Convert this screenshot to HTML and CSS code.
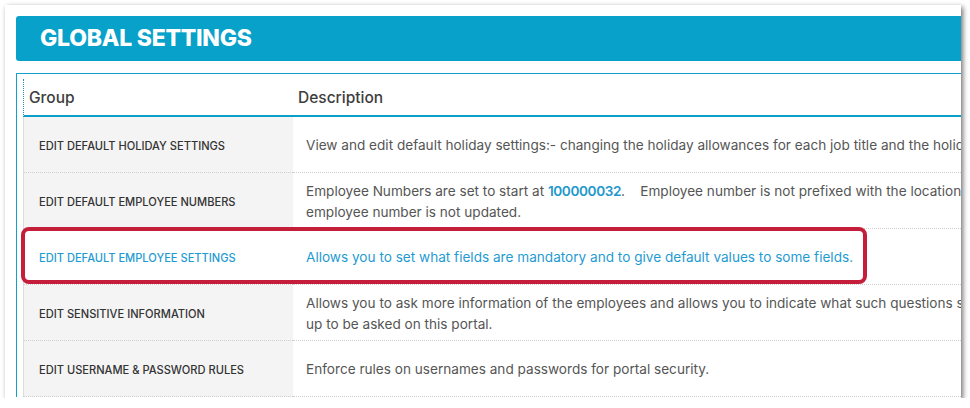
FILE: index.html
```html
<!DOCTYPE html>
<html lang="en">
<head>
    <meta charset="UTF-8">
    <meta name="viewport" content="width=device-width, initial-scale=1.0">
    <title>Global Settings</title>
    <link rel="stylesheet" href="styles.css">
</head>
<body>
    <div class="shot">
        <div class="page">
            <h1 class="banner">GLOBAL SETTINGS</h1>
            <div class="panel">
                <table class="settings">
                    <thead>
                        <tr>
                            <th class="col-group">Group</th>
                            <th>Description</th>
                        </tr>
                    </thead>
                    <tbody>
                        <tr>
                            <td class="label">Edit Default Holiday Settings</td>
                            <td class="desc">View and edit default holiday settings:- changing the holiday allowances for each job title and the holiday year.</td>
                        </tr>
                        <tr>
                            <td class="label">Edit Default Employee Numbers</td>
                            <td class="desc">Employee Numbers are set to start at <b class="num">100000032</b>.&nbsp;&nbsp;&nbsp; Employee number is not prefixed with the location code.<br>employee number is not updated.</td>
                        </tr>
                        <tr class="active">
                            <td class="label">Edit Default Employee Settings</td>
                            <td class="desc">Allows you to set what fields are mandatory and to give default values to some fields.</td>
                        </tr>
                        <tr>
                            <td class="label">Edit Sensitive Information</td>
                            <td class="desc">Allows you to ask more information of the employees and allows you to indicate what such questions should be set<br>up to be asked on this portal.</td>
                        </tr>
                        <tr>
                            <td class="label">Edit Username &amp; Password Rules</td>
                            <td class="desc">Enforce rules on usernames and passwords for portal security.</td>
                        </tr>
                    </tbody>
                </table>
            </div>
        </div>
        <!-- annotation drawn over the screenshot -->
        <div class="callout"></div>
    </div>
</body>
</html>
```

FILE: styles.css
```css
body {
    margin: 0;
    background: #fff;
    font-family: Inter, "Noto Sans", sans-serif;
}
.shot {
    position: relative;
    margin: 5px 0 0 5px;
    width: 956px;
    height: 393px;
    overflow: hidden;
    background: #fff;
    box-shadow: 2px 2px 5px rgba(0,0,0,0.55);
}
.page {
    width: 1150px;
    padding: 11px 0 0 11px;
}
.banner {
    margin: 0;
    height: 45px;
    line-height: 45px;
    padding-left: 24px;
    background-color: #08a1c9;
    border-radius: 3px 0 0 3px;
    color: #fff;
    font-size: 23px;
    font-weight: 800;
    letter-spacing: -0.25px;
}
.panel {
    margin-top: 12px;
    border-top: 1px solid #12a2c9;
    border-left: 1px solid #12a2c9;
    padding: 5px 0 0 6px;
}
.settings {
    border-collapse: separate;
    border-spacing: 0;
    width: 1120px;
}
.settings th {
    height: 36px;
    padding: 0 4px 0 5px;
    text-align: left;
    font-size: 15.5px;
    font-weight: 500;
    color: #3d3d3d;
    border-bottom: 2px solid #0aa0c8;
}
.settings th.col-group {
    width: 260px;
    border-left: 1px dotted #2a8fb8;
}
.settings td {
    height: 53px;
    padding: 2px 0 0;
    border-bottom: 1px dotted #cfcfcf;
    vertical-align: middle;
}
.settings td.label {
    padding-left: 15px;
    background-color: #f4f4f4;
    border-left: 1px solid #dcdcdc;
    text-transform: uppercase;
    font-size: 11.1px;
    font-weight: 500;
    color: #333;
}
.settings td.desc {
    padding-left: 13px;
    font-size: 13.6px;
    line-height: 21px;
    color: #555;
    white-space: nowrap;
}
.num {
    font-weight: 600;
    letter-spacing: -0.4px;
    color: #1e98cc;
}
.settings tr.active td.label {
    background-color: #fff;
}
.settings tr.active td {
    color: #1f9bd2;
}
.callout {
    position: absolute;
    left: 16px;
    top: 222px;
    width: 846px;
    height: 57px;
    box-sizing: border-box;
    border: 4px solid #c41e3a;
    border-radius: 8px;
}
```
